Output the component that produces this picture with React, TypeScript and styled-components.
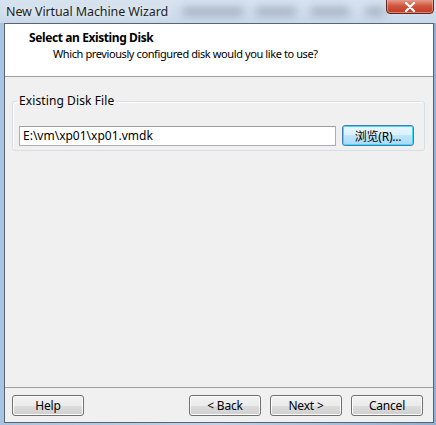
import styled, { createGlobalStyle } from "styled-components";

const Global = createGlobalStyle`
  html, body {
    margin: 0;
    padding: 0;
    width: 436px;
    height: 425px;
    overflow: hidden;
    background: #7fa6cf;
  }
  * {
    box-sizing: border-box;
  }
`;

const font = `"Noto Sans", "Open Sans", "Noto Sans CJK SC", sans-serif`;

function App() {
  return (
    <>
      <Global />
      <Frame>
        <TitleBar>
          <Blur style={{ left: 182, width: 62 }} />
          <Blur style={{ left: 255, width: 42 }} />
          <Blur style={{ left: 310, width: 40 }} />
          <Blur style={{ left: 365, width: 20 }} />
          <Title>New Virtual Machine Wizard</Title>
          <CloseButton>
            <svg width="14" height="10" viewBox="0 0 14 10">
              <path
                d="M3 1 L11 9 M11 1 L3 9"
                stroke="#fff"
                strokeWidth="2.2"
                strokeLinecap="round"
              />
            </svg>
          </CloseButton>
        </TitleBar>
        <Client>
          <Header>
            <HeaderTitle>Select an Existing Disk</HeaderTitle>
            <HeaderSub>Which previously configured disk would you like to use?</HeaderSub>
          </Header>
          <Body>
            <Group>
              <Legend>Existing Disk File</Legend>
              <FileRow>
                <PathInput defaultValue="E:\vm\xp01\xp01.vmdk" />
                <Button $focused $width={72}>
                  浏览(R)...
                </Button>
              </FileRow>
            </Group>
          </Body>
          <Footer>
            <Button $width={72}>Help</Button>
            <Spacer />
            <Button $width={72}>&lt; Back</Button>
            <Button $width={72}>Next &gt;</Button>
            <Button $width={72}>Cancel</Button>
          </Footer>
        </Client>
      </Frame>
    </>
  );
}

export default App;

const Frame = styled.div`
  width: 436px;
  height: 425px;
  display: flex;
  flex-direction: column;
  padding: 0 2px 2px 4px;
  background: linear-gradient(90deg, #a7c4e2 0%, #bcd3ea 50%, #8fb0d6 100%);
  font-family: ${font};
  font-size: 12px;
  color: #000;
`;

const TitleBar = styled.div`
  position: relative;
  height: 23px;
  flex: none;
  display: flex;
  align-items: center;
  margin: 0 -2px 0 -4px;
  padding-left: 6px;
  background: linear-gradient(180deg, #d7e3ef 0%, #c9d9ea 100%);
  overflow: hidden;
`;

const Blur = styled.div`
  position: absolute;
  top: 7px;
  height: 9px;
  border-radius: 6px;
  background: rgba(70, 80, 95, 0.3);
  filter: blur(4px);
`;

const Title = styled.span`
  position: relative;
  font-size: 12.5px;
  color: #1e1e1e;
  text-shadow: 0 0 6px rgba(255, 255, 255, 0.9);
  letter-spacing: -0.1px;
`;

const CloseButton = styled.div`
  position: absolute;
  top: -2px;
  right: 2px;
  width: 48px;
  height: 16px;
  display: flex;
  align-items: center;
  justify-content: center;
  padding-top: 2px;
  border: 1px solid #5b2a22;
  border-radius: 0 0 4px 4px;
  background: linear-gradient(180deg, #e8a796 0%, #d0553e 50%, #c13a22 100%);
  box-shadow: inset 0 0 0 1px rgba(255, 200, 190, 0.5);
`;

const Client = styled.div`
  flex: 1;
  display: flex;
  flex-direction: column;
  border: 1px solid #5a6470;
  background: #f0f0f0;
`;

const Header = styled.div`
  height: 53px;
  flex: none;
  display: flex;
  flex-direction: column;
  padding: 6px 0 0 24px;
  background: #fff;
  border-bottom: 1px solid #a0a0a0;
`;

const HeaderTitle = styled.div`
  font-weight: bold;
  font-size: 12px;
  line-height: 16px;
  letter-spacing: -0.4px;
`;

const HeaderSub = styled.div`
  margin-left: 24px;
  line-height: 15px;
  font-size: 11px;
  letter-spacing: -0.4px;
`;

const Body = styled.div`
  flex: 1;
  padding: 17px 8px 0 7px;
  border-bottom: 1px solid #a0a0a0;
`;

const Group = styled.fieldset`
  margin: 0;
  padding: 17px 6px 4px 6px;
  border: 1px solid #d5dfe5;
  border-radius: 3px;
  box-shadow: inset 1px 1px 0 #fff;
`;

const Legend = styled.legend`
  margin-left: -2px;
  padding: 0 2px;
  font-size: 12px;
  letter-spacing: 0.1px;
  line-height: 14px;
`;

const FileRow = styled.div`
  display: flex;
  align-items: center;
  gap: 6px;
`;

const PathInput = styled.input`
  width: 317px;
  height: 20px;
  padding: 0 3px;
  border: 1px solid #abadb3;
  border-top-color: #9aa0a8;
  background: #fff;
  font-family: ${font};
  font-size: 12px;
  letter-spacing: 0;
  color: #000;
  outline: none;
`;

const Footer = styled.div`
  height: 34px;
  flex: none;
  display: flex;
  align-items: center;
  gap: 9px;
  padding: 0 10px 0 7px;
`;

const Spacer = styled.div`
  flex: 1;
`;

const Button = styled.button<{ $focused?: boolean; $width: number }>`
  width: ${(p) => p.$width}px;
  height: 21px;
  padding: 0;
  border: 1px solid ${(p) => (p.$focused ? "#3c7fb1" : "#707070")};
  border-radius: 3px;
  background: ${(p) =>
    p.$focused
      ? "linear-gradient(180deg, #eaf6fd 0%, #d9f0fc 50%, #bee6fd 50%, #a7d9f5 100%)"
      : "linear-gradient(180deg, #f2f2f2 0%, #ebebeb 50%, #dddddd 50%, #cfcfcf 100%)"};
  box-shadow: inset 0 0 0 1px ${(p) => (p.$focused ? "#48d8fb" : "#fcfcfc")};
  font-family: ${font};
  font-size: 12px;
  letter-spacing: -0.2px;
  color: #000;
`;
